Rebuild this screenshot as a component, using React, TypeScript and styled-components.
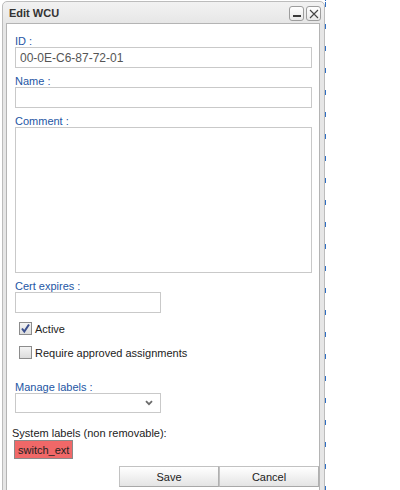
import styled, { createGlobalStyle } from 'styled-components';

const GlobalStyle = createGlobalStyle`
  html, body {
    margin: 0;
    padding: 0;
    background: #ffffff;
    font-family: 'Liberation Sans', Arial, sans-serif;
  }
  * {
    box-sizing: border-box;
  }
`;

const Check = () => (
  <svg width="11" height="11" viewBox="0 0 11 11">
    <path d="M2 5.5 L4.3 8.5 L9 1.5" fill="none" stroke="#3b4f8e" strokeWidth="2" />
  </svg>
);

const Chevron = () => (
  <svg width="8" height="6" viewBox="0 0 8 6">
    <path d="M1 1.2 L4 4.2 L7 1.2" fill="none" stroke="#6b6b6b" strokeWidth="1.8" />
  </svg>
);

const App = () => {
  return (
    <Desktop>
      <GlobalStyle />
      <Window>
        <TitleBar>
          <Title>Edit WCU</Title>
          <TitleButtons>
            <TitleButton aria-label="minimize">
              <MinBar />
            </TitleButton>
            <TitleButton aria-label="close">
              <svg width="10" height="10" viewBox="0 0 10 10">
                <path d="M1 1 L9 9 M9 1 L1 9" stroke="#444" strokeWidth="1.1" />
              </svg>
            </TitleButton>
          </TitleButtons>
        </TitleBar>

        <Content>
          <Field>
            <Label>ID :</Label>
            <Input defaultValue="00-0E-C6-87-72-01" />
          </Field>
          <Field>
            <Label>Name :</Label>
            <Input />
          </Field>
          <Field>
            <Label>Comment :</Label>
            <TextArea />
          </Field>
          <Field>
            <Label>Cert expires :</Label>
            <Input $short />
          </Field>

          <CheckRow $top={2}>
            <CheckBox>
              <Check />
            </CheckBox>
            <CheckText>Active</CheckText>
          </CheckRow>
          <CheckRow $top={11}>
            <CheckBox />
            <CheckText>Require approved assignments</CheckText>
          </CheckRow>

          <Field $top={22}>
            <Label>Manage labels :</Label>
            <Select>
              <Chevron />
            </Select>
          </Field>

          <SystemLabels>
            <SystemTitle>System labels (non removable):</SystemTitle>
            <Tag>switch_ext</Tag>
          </SystemLabels>

          <ButtonBar>
            <Button>Save</Button>
            <Button>Cancel</Button>
          </ButtonBar>
        </Content>
      </Window>
      <BackgroundEdge />
    </Desktop>
  );
};

const Desktop = styled.div`
  display: flex;
  height: 490px;
  overflow: hidden;
  background: #ffffff;
`;

const Window = styled.div`
  width: 323px;
  margin-left: 2px;
  margin-top: 1px;
  height: 496px;
  flex-shrink: 0;
  display: flex;
  flex-direction: column;
  padding: 0 4px 0 3px;
  border: 1px solid #bcbcbc;
  border-radius: 5px 5px 0 0;
  background: linear-gradient(#f2f2f2, #e6e6e6 22px, #e6e6e6);
`;

const TitleBar = styled.div`
  height: 21px;
  display: flex;
  align-items: center;
  justify-content: space-between;
  padding: 0 0 0 3px;
`;

const Title = styled.span`
  font-size: 11px;
  font-weight: bold;
  color: #333333;
  margin-top: 1px;
`;

const TitleButtons = styled.div`
  display: flex;
  gap: 2px;
  margin-right: -1px;
  margin-top: 2px;
`;

const TitleButton = styled.div`
  width: 15px;
  height: 15px;
  border: 1px solid #9d9d9d;
  border-radius: 3px;
  background: linear-gradient(#ffffff, #e9e9e9);
  display: flex;
  align-items: center;
  justify-content: center;
`;

const MinBar = styled.span`
  width: 8px;
  height: 2px;
  margin-top: 5px;
  background: #3a3a3a;
`;

const Content = styled.div`
  flex: 1;
  display: flex;
  flex-direction: column;
  align-items: flex-start;
  background: #ffffff;
  border: 1px solid #b4b4b4;
  padding: 11px 7px 0 8px;
`;

const Field = styled.div<{ $top?: number }>`
  width: 100%;
  display: flex;
  flex-direction: column;
  align-items: flex-start;
  margin-top: ${(p) => p.$top ?? 0}px;
  margin-bottom: 7px;
`;

const Label = styled.label`
  font-size: 11px;
  line-height: 12px;
  color: #2456a4;
`;

const Input = styled.input<{ $short?: boolean }>`
  width: ${(p) => (p.$short ? '146px' : '100%')};
  height: 21px;
  border: 1px solid #c9c9c9;
  border-radius: 0;
  padding: 0 4px;
  font-family: 'Liberation Sans', Arial, sans-serif;
  font-size: 12px;
  color: #555555;
  background: #ffffff;
  outline: none;
`;

const TextArea = styled.textarea`
  width: 100%;
  height: 146px;
  border: 1px solid #c9c9c9;
  resize: none;
  outline: none;
  margin: 0;
  display: block;
`;

const CheckRow = styled.div<{ $top: number }>`
  display: flex;
  align-items: center;
  margin: ${(p) => p.$top}px 0 0 4px;
  height: 13px;
`;

const CheckBox = styled.span`
  width: 13px;
  height: 13px;
  border: 1px solid #8c8c8c;
  background: linear-gradient(#f4f4f4, #dcdcdc);
  display: flex;
  align-items: center;
  justify-content: center;
`;

const CheckText = styled.span`
  font-size: 11px;
  color: #222222;
  margin-left: 3px;
  margin-top: 1px;
`;

const Select = styled.div`
  width: 146px;
  height: 20px;
  border: 1px solid #c9c9c9;
  background: #ffffff;
  display: flex;
  align-items: center;
  justify-content: flex-end;
  padding-right: 7px;
`;

const SystemLabels = styled.div`
  display: flex;
  flex-direction: column;
  align-items: flex-start;
  margin: 7px 0 0 -3px;
`;

const SystemTitle = styled.span`
  font-size: 11px;
  line-height: 13px;
  color: #222222;
`;

const Tag = styled.span`
  margin-left: 2px;
  height: 19px;
  padding: 0 3px;
  display: flex;
  align-items: center;
  font-size: 11px;
  color: #222222;
  background: #f06868;
  border: 1px solid #8a8a8a;
`;

const ButtonBar = styled.div`
  align-self: stretch;
  display: flex;
  justify-content: flex-end;
  margin: 7px -7px 0 0;
`;

const Button = styled.button`
  width: 100px;
  height: 21px;
  padding: 0;
  font-family: 'Liberation Sans', Arial, sans-serif;
  font-size: 11px;
  color: #222222;
  background: linear-gradient(#ffffff, #e4e4e4);
  border: 1px solid #c2c2c2;
  border-bottom-color: #a8a8a8;
  border-right-color: #b0b0b0;
  border-radius: 0;
`;

const BackgroundEdge = styled.div`
  width: 1px;
  height: 100%;
  background: repeating-linear-gradient(
    to bottom,
    #2f6fc4 0,
    #2f6fc4 5px,
    transparent 5px,
    transparent 22px
  );
  background-position: 0 2px;
`;

export default App;
